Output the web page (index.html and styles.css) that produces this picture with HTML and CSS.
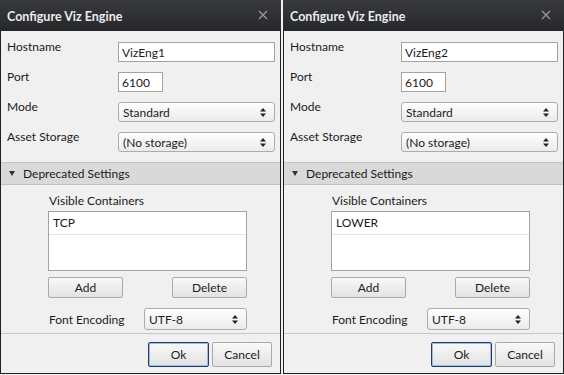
FILE: index.html
```html
<!DOCTYPE html>
<html lang="en">
<head>
    <meta charset="UTF-8">
    <title>Configure Viz Engine</title>
    <link rel="stylesheet" href="styles.css">
</head>
<body>
    <div class="screen">

        <!-- 第一台 -->
        <div class="dialog">
            <div class="titlebar">
                <span class="title">Configure Viz Engine</span>
                <svg class="close" width="10" height="10" viewBox="0 0 10 10"><path d="M1 1L9 9M9 1L1 9" /></svg>
            </div>
            <div class="form">
                <label>Hostname</label>
                <input class="field" type="text" value="VizEng1">
                <label>Port</label>
                <input class="field port" type="text" value="6100">
                <label>Mode</label>
                <div class="combo"><span>Standard</span><svg width="6" height="9" viewBox="0 0 6 9"><path d="M0 3.5L3 0L6 3.5ZM0 5.5L3 9L6 5.5Z" /></svg></div>
                <label>Asset Storage</label>
                <div class="combo"><span>(No storage)</span><svg width="6" height="9" viewBox="0 0 6 9"><path d="M0 3.5L3 0L6 3.5ZM0 5.5L3 9L6 5.5Z" /></svg></div>
            </div>
            <div class="group-head"><svg class="arrow" width="6" height="5" viewBox="0 0 6 5"><path d="M0 0H6L3 5Z" /></svg>Deprecated Settings</div>
            <div class="group">
                <div class="group-label">Visible Containers</div>
                <div class="listbox">
                    <div class="list-row">TCP</div>
                </div>
                <div class="list-buttons">
                    <button class="btn">Add</button>
                    <button class="btn">Delete</button>
                </div>
                <div class="enc-row">
                    <span>Font Encoding</span>
                    <div class="combo enc"><span>UTF-8</span><svg width="6" height="9" viewBox="0 0 6 9"><path d="M0 3.5L3 0L6 3.5ZM0 5.5L3 9L6 5.5Z" /></svg></div>
                </div>
            </div>
            <div class="footer">
                <button class="btn ok">Ok</button>
                <button class="btn cancel">Cancel</button>
            </div>
        </div>

        <!-- 第二台 -->
        <div class="dialog">
            <div class="titlebar">
                <span class="title">Configure Viz Engine</span>
                <svg class="close" width="10" height="10" viewBox="0 0 10 10"><path d="M1 1L9 9M9 1L1 9" /></svg>
            </div>
            <div class="form">
                <label>Hostname</label>
                <input class="field" type="text" value="VizEng2">
                <label>Port</label>
                <input class="field port" type="text" value="6100">
                <label>Mode</label>
                <div class="combo"><span>Standard</span><svg width="6" height="9" viewBox="0 0 6 9"><path d="M0 3.5L3 0L6 3.5ZM0 5.5L3 9L6 5.5Z" /></svg></div>
                <label>Asset Storage</label>
                <div class="combo"><span>(No storage)</span><svg width="6" height="9" viewBox="0 0 6 9"><path d="M0 3.5L3 0L6 3.5ZM0 5.5L3 9L6 5.5Z" /></svg></div>
            </div>
            <div class="group-head"><svg class="arrow" width="6" height="5" viewBox="0 0 6 5"><path d="M0 0H6L3 5Z" /></svg>Deprecated Settings</div>
            <div class="group">
                <div class="group-label">Visible Containers</div>
                <div class="listbox">
                    <div class="list-row">LOWER</div>
                </div>
                <div class="list-buttons">
                    <button class="btn">Add</button>
                    <button class="btn">Delete</button>
                </div>
                <div class="enc-row">
                    <span>Font Encoding</span>
                    <div class="combo enc"><span>UTF-8</span><svg width="6" height="9" viewBox="0 0 6 9"><path d="M0 3.5L3 0L6 3.5ZM0 5.5L3 9L6 5.5Z" /></svg></div>
                </div>
            </div>
            <div class="footer">
                <button class="btn ok">Ok</button>
                <button class="btn cancel">Cancel</button>
            </div>
        </div>

    </div>
</body>
</html>
```

FILE: styles.css
```css
body{
    margin: 0;
    background-color: #f0f0f0;
    font-family: Lato, "Noto Sans", sans-serif;
    font-size: 12px;
    color: #1b1b1b;
}
.screen{
    display: flex;
    gap: 2px;
}
.dialog{
    width: 281px;
    height: 374px;
    box-sizing: border-box;
    border: 1px solid #1f2023;
    border-top: 0;
    background-color: #f0f0f0;
    display: flex;
    flex-direction: column;
}
.titlebar{
    height: 31px;
    flex: none;
    display: flex;
    align-items: center;
    justify-content: space-between;
    padding: 2px 13px 0 7px;
    box-sizing: border-box;
    background: linear-gradient(#383a3e, #25272a);
    margin: 0 -1px;
}
.title{
    color: #ececec;
    font-weight: bold;
    font-size: 12.5px;
}
.close{
    margin-top: -3px;
}
.close path{
    stroke: #9a9a9a;
    stroke-width: 1.3;
    fill: none;
}
.form{
    display: grid;
    grid-template-columns: 111px 157px;
    grid-auto-rows: 20px;
    row-gap: 10px;
    padding: 11px 6px 0;
}
.form label{
    align-self: start;
    margin-top: -3px;
    line-height: 16px;
}
.field{
    box-sizing: border-box;
    height: 20px;
    width: 157px;
    border: 1px solid #a2a2a2;
    background: #fff;
    font: inherit;
    color: inherit;
    padding: 0 3px;
    margin: 0;
    outline: none;
}
.port{
    width: 45px;
}
.combo{
    box-sizing: border-box;
    height: 20px;
    display: flex;
    align-items: center;
    justify-content: space-between;
    padding: 1px 8px 0 4px;
    border: 1px solid #acacac;
    border-radius: 3px;
    background: linear-gradient(#fefefe, #ebebeb);
}
.combo svg path{
    fill: #222;
}
.group-head{
    margin-top: 10px;
    height: 23px;
    box-sizing: border-box;
    border-top: 1px solid #c3c3c3;
    border-bottom: 1px solid #c3c3c3;
    background-color: #d9d9d9;
    display: flex;
    align-items: center;
    padding-left: 8px;
}
.arrow{
    margin-right: 8px;
}
.arrow path{
    fill: #333;
}
.group{
    flex: 1;
    padding: 8px 0 0 47px;
    border-bottom: 1px solid #c6c6c6;
}
.group-label{
    line-height: 16px;
    padding-left: 1px;
}
.listbox{
    margin-top: 2px;
    width: 199px;
    height: 60px;
    box-sizing: border-box;
    border: 1px solid #a2a2a2;
    background: #fff;
}
.list-row{
    height: 22px;
    line-height: 22px;
    padding-left: 4px;
    border-bottom: 1px solid #e4e4e4;
}
.list-buttons{
    width: 199px;
    display: flex;
    justify-content: space-between;
    margin-top: 6px;
}
.btn{
    box-sizing: border-box;
    height: 21px;
    width: 75px;
    padding: 0;
    border: 1px solid #a9a9a9;
    border-radius: 2px;
    background: linear-gradient(#f8f8f8, #e3e3e3);
    font: inherit;
    color: inherit;
}
.enc-row{
    width: 199px;
    display: flex;
    justify-content: space-between;
    align-items: center;
    margin-top: 10px;
    padding-left: 1px;
    box-sizing: border-box;
}
.enc{
    width: 103px;
    height: 22px;
}
.footer{
    height: 39px;
    flex: none;
    display: flex;
    justify-content: flex-end;
    gap: 3px;
    padding: 8px 8px 0 0;
    box-sizing: border-box;
}
.footer .btn{
    height: 25px;
}
.ok{
    width: 61px;
    border: 1px solid #1f3d66;
    box-shadow: inset 0 0 0 1px #9fbbe0;
}
.cancel{
    width: 60px;
}
```
